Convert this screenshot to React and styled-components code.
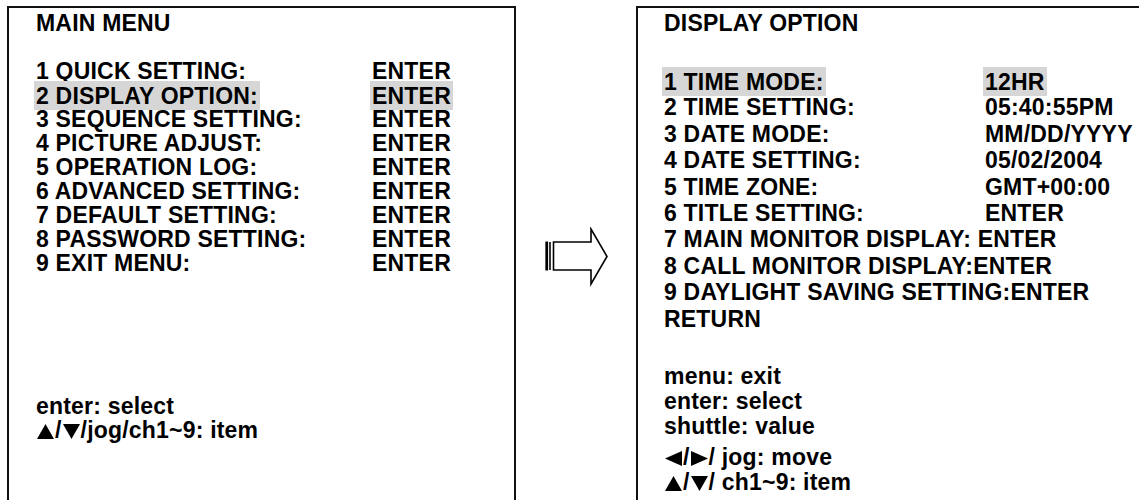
import React from "react";
import styled, { createGlobalStyle } from "styled-components";

const GlobalStyle = createGlobalStyle`
  html, body {
    margin: 0;
    padding: 0;
    background: #fff;
    overflow: hidden;
  }
`;

const mainItems = [
  ["1 QUICK SETTING:", "ENTER"],
  ["2 DISPLAY OPTION:", "ENTER", true],
  ["3 SEQUENCE SETTING:", "ENTER"],
  ["4 PICTURE ADJUST:", "ENTER"],
  ["5 OPERATION LOG:", "ENTER"],
  ["6 ADVANCED SETTING:", "ENTER"],
  ["7 DEFAULT SETTING:", "ENTER"],
  ["8 PASSWORD SETTING:", "ENTER"],
  ["9 EXIT MENU:", "ENTER"],
];

const displayItems = [
  ["1 TIME MODE:", "12HR", true],
  ["2 TIME SETTING:", "05:40:55PM"],
  ["3 DATE MODE:", "MM/DD/YYYY"],
  ["4 DATE SETTING:", "05/02/2004"],
  ["5 TIME ZONE:", "GMT+00:00"],
  ["6 TITLE SETTING:", "ENTER"],
  ["7 MAIN MONITOR DISPLAY:\u00a0", "ENTER", false, true],
  ["8 CALL MONITOR DISPLAY:", "ENTER", false, true],
  ["9 DAYLIGHT SAVING SETTING:", "ENTER", false, true],
  ["RETURN", ""],
];

const triPoints = {
  up: "8.5,0 17,15 0,15",
  down: "0,0 17,0 8.5,15",
  left: "0,7.5 17,0 17,15",
  right: "0,0 17,7.5 0,15",
};

function Tri({ dir }) {
  return (
    <TriIcon viewBox="0 0 17 15" aria-hidden="true">
      <polygon points={triPoints[dir]} fill="#000" />
    </TriIcon>
  );
}

function Arrow() {
  return (
    <ArrowBox>
      <svg width="66" height="60" viewBox="0 0 66 60">
        <g fill="none" stroke="#000" strokeWidth="1.6">
          <line x1="2.5" y1="15" x2="2.5" y2="43" />
          <line x1="6" y1="15" x2="6" y2="43" />
          <polygon points="9.5,15 47,15 47,2 63,29.5 47,57 47,43 9.5,43" />
        </g>
        <rect x="1.5" y="14.5" width="2.6" height="29" fill="#000" />
      </svg>
    </ArrowBox>
  );
}

function MenuRow({ label, value, active, wide, labelWidth }) {
  return (
    <Row>
      <Label $width={wide ? null : labelWidth}>
        {active ? <Mark>{label}</Mark> : label}
      </Label>
      <span>{active ? <Mark>{value}</Mark> : value}</span>
    </Row>
  );
}

export default function App() {
  return (
    <>
      <GlobalStyle />
      <Page>
        <Panel $width={509} $lineHeight={24} $padLeft={27}>
          <Title>MAIN MENU</Title>
          <List $top={24}>
            {mainItems.map(([label, value, active]) => (
              <MenuRow
                key={label}
                label={label}
                value={value}
                active={active}
                labelWidth={336}
              />
            ))}
          </List>
          <Help $top={119}>
            <HelpLine>enter: select</HelpLine>
            <HelpLine>
              <Tri dir="up" />/<Tri dir="down" />/jog/ch1~9: item
            </HelpLine>
          </Help>
        </Panel>

        <Arrow />

        <Panel $width={560} $lineHeight={26.4} $padLeft={26}>
          <Title>DISPLAY OPTION</Title>
          <List $top={33}>
            {displayItems.map(([label, value, active, wide]) => (
              <MenuRow
                key={label}
                label={label}
                value={value}
                active={active}
                wide={wide}
                labelWidth={321}
              />
            ))}
          </List>
          <Help $top={32} $lineHeight={25}>
            <HelpLine>menu: exit</HelpLine>
            <HelpLine>enter: select</HelpLine>
            <HelpLine>shuttle: value</HelpLine>
            <HelpLine $gap={6}>
              <Tri dir="left" />/<Tri dir="right" />/ jog: move
            </HelpLine>
            <HelpLine>
              <Tri dir="up" />/<Tri dir="down" />/ ch1~9: item
            </HelpLine>
          </Help>
        </Panel>
      </Page>
    </>
  );
}

const Page = styled.div`
  display: flex;
  align-items: flex-start;
  width: 1139px;
  height: 500px;
  overflow: hidden;
  padding: 6px 0 0 7px;
  box-sizing: border-box;
  font-family: "Liberation Sans", Arial, sans-serif;
  font-weight: bold;
  font-size: 23px;
  letter-spacing: 0.2px;
  color: #000;
`;

const Panel = styled.section`
  flex-shrink: 0;
  box-sizing: border-box;
  width: ${(p) => p.$width}px;
  height: 540px;
  border: 2px solid #111;
  padding: 3px 0 0 ${(p) => p.$padLeft}px;
  line-height: ${(p) => p.$lineHeight}px;
  white-space: nowrap;
`;

const Title = styled.div`
  line-height: 24px;
`;

const List = styled.div`
  margin-top: ${(p) => p.$top}px;
`;

const Row = styled.div`
  display: flex;
`;

const Label = styled.span`
  flex-shrink: 0;
  width: ${(p) => (p.$width ? `${p.$width}px` : "auto")};
`;

const Mark = styled.span`
  background: #d6d6d6;
  padding: 1.5px 2px;
  margin: 0 -2px;
`;

const Help = styled.div`
  margin-top: ${(p) => p.$top}px;
  line-height: ${(p) => (p.$lineHeight ? `${p.$lineHeight}px` : "inherit")};
`;

const HelpLine = styled.div`
  margin-top: ${(p) => p.$gap || 0}px;
`;

const TriIcon = styled.svg`
  display: inline-block;
  width: 17px;
  height: 15px;
  margin: 0 1px;
  vertical-align: -1px;
`;

const ArrowBox = styled.div`
  flex-shrink: 0;
  margin: 221px 26px 0 28px;
  line-height: 0;
`;
